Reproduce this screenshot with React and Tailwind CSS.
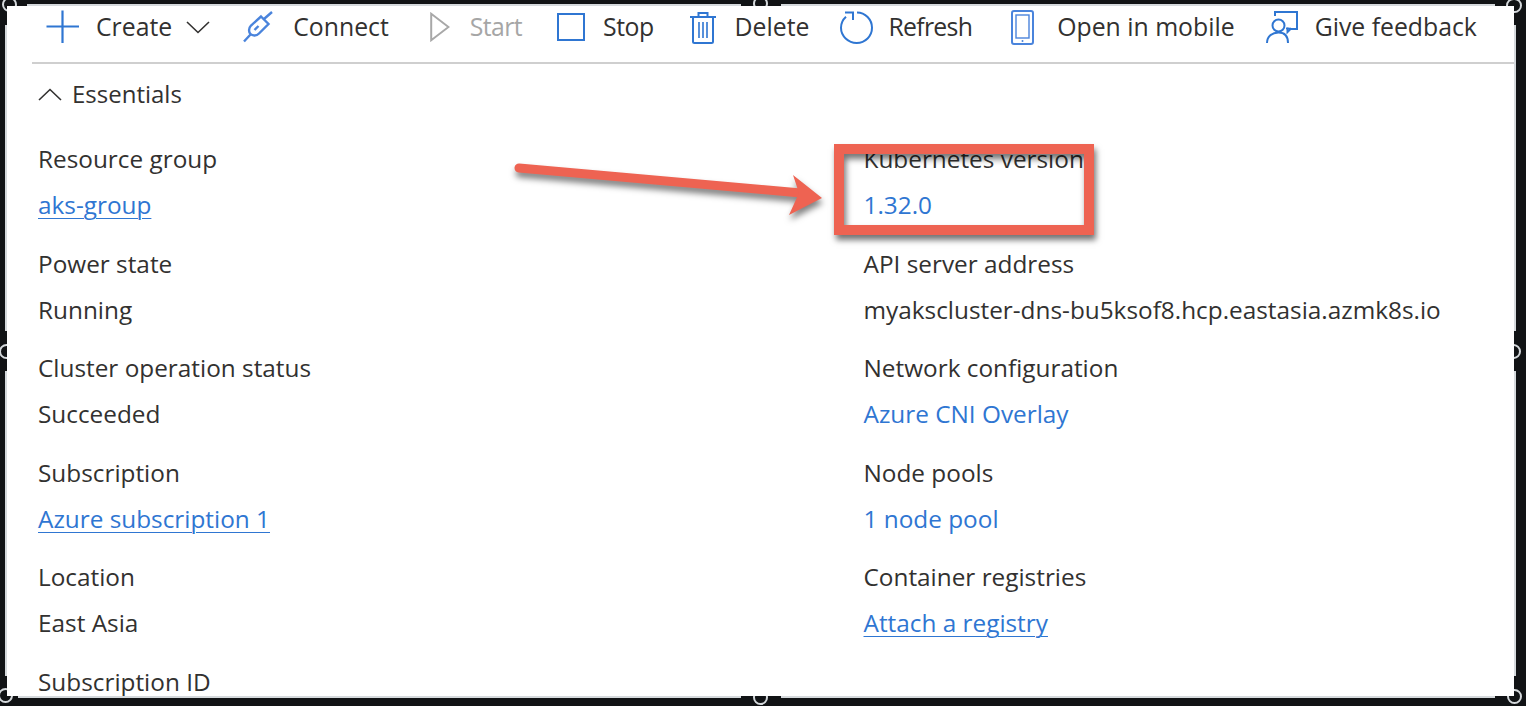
import React from "react";

const toolbarIcon = "w-full h-full";

function PlusIcon() {
  return (
    <svg viewBox="0 0 34 34" className={toolbarIcon} fill="none" stroke="#2f76d2" strokeWidth="2.2">
      <path d="M0.5 16.5H33M16.5 0.5V33" />
    </svg>
  );
}

function PlugIcon() {
  return (
    <svg viewBox="0 0 30 32" className={toolbarIcon} fill="none" stroke="#4a84dc" strokeWidth="2.4">
      <path d="M29 1L21 8M1 30.5L7.5 23.5" />
      <path d="M18 5.5L25.5 13L16 22.5C13.5 25 9.5 25 7.5 23C5.5 21 5.5 17 8 14.5Z" />
      <path d="M11.5 19L15.5 15" />
    </svg>
  );
}

function PlayIcon() {
  return (
    <svg viewBox="0 0 20 30" className={toolbarIcon} fill="none" stroke="#a8a8a8" strokeWidth="2">
      <path d="M1.2 1.8V28.2L18.5 15Z" />
    </svg>
  );
}

function StopIcon() {
  return (
    <svg viewBox="0 0 28 28" className={toolbarIcon} fill="none" stroke="#2f76d2" strokeWidth="2">
      <rect x="1" y="1" width="26" height="26" />
    </svg>
  );
}

function TrashIcon() {
  return (
    <svg viewBox="0 0 26 33" className={toolbarIcon} fill="none" stroke="#2f76d2" strokeWidth="2">
      <path d="M0 6H26M8.5 6V2H17.5V6" />
      <path d="M3 6V30.5C3 31.5 3.5 32 4.5 32H21.5C22.5 32 23 31.5 23 30.5V6" />
      <path d="M9 11V27M13 11V27M17 11V27" strokeWidth="1.6" />
    </svg>
  );
}

function RefreshIcon() {
  return (
    <svg viewBox="0 0 33 33" className={toolbarIcon} fill="none" stroke="#2f76d2" strokeWidth="2">
      <path d="M17 1.5C25.3 1.5 32 8.5 32 16.8C32 25 25.3 32 16.7 32C8.2 32 1 25 1 16.8C1 12.5 3 8.5 6 5.8" />
      <path d="M5 1.5H13V9" />
    </svg>
  );
}

function MobileIcon() {
  return (
    <svg viewBox="0 0 23 35" className={toolbarIcon} fill="none" stroke="#4a84dc" strokeWidth="2">
      <rect x="1" y="1" width="21" height="33" rx="2" />
      <rect x="5" y="5" width="13" height="23" strokeWidth="1.4" />
      <circle cx="11.5" cy="31" r="1" fill="#4a84dc" stroke="none" />
    </svg>
  );
}

function FeedbackIcon() {
  return (
    <svg viewBox="0 0 32 33" className={toolbarIcon} fill="none" stroke="#2f76d2" strokeWidth="2">
      <path d="M9 5V1H31V18H24.5L21.5 21V16.5" />
      <circle cx="12.5" cy="14.5" r="6" />
      <path d="M1 32C1 25.5 6 21.5 12.5 21.5C19 21.5 22 25.5 22 32" />
      <path d="M20 17.5H25" strokeWidth="1.6" />
    </svg>
  );
}

function Chevron({ up }) {
  return (
    <svg viewBox="0 0 24 13" className="w-full h-full" fill="none" stroke="#323130" strokeWidth="1.6">
      <path d={up ? "M1 12L12 1.5L23 12" : "M1 1L12 11.5L23 1"} />
    </svg>
  );
}

const actions = [
  { label: "Create", icon: <PlusIcon />, box: "ml-[14px] w-[34px] h-[34px] mr-[16px]" },
  { label: "Connect", icon: <PlugIcon />, box: "ml-[33px] w-[30px] h-[32px] mr-[20px]" },
  { label: "Start", icon: <PlayIcon />, box: "ml-[41px] w-[20px] h-[30px] mr-[20px]", muted: true, text: "tracking-[-0.6px]" },
  { label: "Stop", icon: <StopIcon />, box: "ml-[35px] w-[28px] h-[28px] mr-[18px]", text: "tracking-[-0.5px]" },
  { label: "Delete", icon: <TrashIcon />, box: "ml-[36px] w-[26px] h-[33px] mr-[19px]" },
  { label: "Refresh", icon: <RefreshIcon />, box: "ml-[31px] w-[33px] h-[33px] mr-[15px]", text: "tracking-[-0.7px]" },
  { label: "Open in mobile", icon: <MobileIcon />, box: "ml-[39px] w-[23px] h-[35px] mr-[23px]" },
  { label: "Give feedback", icon: <FeedbackIcon />, box: "ml-[31px] w-[32px] h-[33px] mr-[17px]" },
];

const rows = [
  [
    { label: "Resource group", value: "aks-group", link: true, underline: true },
    { label: "Kubernetes version", value: "1.32.0", link: true },
  ],
  [
    { label: "Power state", value: "Running" },
    { label: "API server address", value: "myakscluster-dns-bu5ksof8.hcp.eastasia.azmk8s.io" },
  ],
  [
    { label: "Cluster operation status", value: "Succeeded" },
    { label: "Network configuration", value: "Azure CNI Overlay", link: true },
  ],
  [
    { label: "Subscription", value: "Azure subscription 1", link: true, underline: true },
    { label: "Node pools", value: "1 node pool", link: true },
  ],
  [
    { label: "Location", value: "East Asia" },
    { label: "Container registries", value: "Attach a registry", link: true, underline: true },
  ],
];

function Field({ label, value, link, underline }) {
  return (
    <div className="h-[104.6px]">
      <div className="h-[46px] leading-[46px] text-[#323130]">{label}</div>
      <div className={`h-[46px] leading-[46px] ${link ? "text-[#2f76d2]" : "text-[#323130]"} ${underline ? "underline underline-offset-[4px] decoration-1" : ""}`}>
        {value}
      </div>
    </div>
  );
}

// selection handle of the screenshot tool, the dark patch clips its ring
function Handle({ patch, ring }) {
  return (
    <div className={`absolute overflow-hidden bg-[#111315] ${patch}`}>
      <div className={`absolute w-[15px] h-[15px] rounded-full border-2 border-[#d5d9dc] ${ring}`} />
    </div>
  );
}

export default function App() {
  return (
    <div className="relative w-[1526px] h-[706px] overflow-hidden bg-[#111315] font-['Open_Sans',sans-serif] text-[24.35px]">
      <div className="ml-[5px] pt-[4px] w-[1511px] h-[698px]">
        <div className="h-full border-2 border-[#d5d9dc] bg-white overflow-hidden">
          <div className="ml-[25px] h-[58px] pb-[14px] flex items-center border-b-2 border-[#cfcfcf] text-[24.8px]">
            {actions.map((a) => (
              <div key={a.label} className="flex items-center shrink-0">
                <div className={a.box}>{a.icon}</div>
                <span className={`${a.muted ? "text-[#a6a6a6]" : "text-[#323130]"} ${a.text || ""}`}>{a.label}</span>
                {a.label === "Create" && (
                  <div className="ml-[14px] w-[24px] h-[13px]">
                    <Chevron />
                  </div>
                )}
              </div>
            ))}
          </div>

          <div className="ml-[31px] mt-[15px] h-[30px] flex items-center text-[#323130] text-[24px]">
            <div className="w-[24px] h-[13px] mr-[10px]">
              <Chevron up />
            </div>
            Essentials
          </div>

          <div className="ml-[31px] mt-[27px] grid grid-cols-[825.5px_1fr]">
            {rows.flat().map((f) => (
              <Field key={f.label} {...f} />
            ))}
            <div className="h-[46px] leading-[46px] text-[#323130]">Subscription ID</div>
          </div>
        </div>
      </div>

      {/* annotation */}
      <svg viewBox="0 0 330 70" className="absolute left-[505px] top-[155px] w-[330px] h-[70px] drop-shadow-[1px_5px_3px_rgba(0,0,0,0.5)]">
        <path d="M14 13L296 38" stroke="#ee6352" strokeWidth="9" strokeLinecap="round" />
        <path d="M288 20L317 43L284 60L294 38Z" fill="#ee6352" />
      </svg>
      <div className="absolute left-[834px] top-[144px] w-[260px] h-[91px] border-[10px] border-[#ee6352] shadow-[2px_5px_6px_rgba(0,0,0,0.55),inset_2px_5px_6px_rgba(0,0,0,0.55)]" />

      <Handle patch="left-0 top-0 w-[27px] h-[6px]" ring="left-[2px] -top-[3px]" />
      <Handle patch="left-0 top-0 w-[7px] h-[25px]" ring="left-[2px] -top-[3px]" />
      <Handle patch="left-[741px] top-0 w-[40px] h-[6px]" ring="left-[12px] -top-[4px]" />
      <Handle patch="left-[1495px] top-0 w-[31px] h-[6px]" ring="left-[11px] -top-[2px]" />
      <Handle patch="left-[1514px] top-0 w-[12px] h-[25px]" ring="-left-[7px] -top-[2px]" />
      <Handle patch="left-0 top-[331px] w-[7px] h-[40px]" ring="-left-[1px] top-[13px]" />
      <Handle patch="left-[1514px] top-[331px] w-[12px] h-[40px]" ring="-left-[8px] top-[13px]" />
      <Handle patch="left-0 top-[676px] w-[7px] h-[30px]" ring="-left-[2px] top-[12px]" />
      <Handle patch="left-0 top-[696px] w-[18px] h-[10px]" ring="-left-[2px] -top-[8px]" />
      <Handle patch="left-[741px] top-[696px] w-[40px] h-[10px]" ring="left-[12px] -top-[6px]" />
      <Handle patch="left-[1495px] top-[696px] w-[31px] h-[10px]" ring="left-[12px] -top-[7px]" />
      <Handle patch="left-[1514px] top-[676px] w-[12px] h-[30px]" ring="-left-[7px] top-[13px]" />
    </div>
  );
}
